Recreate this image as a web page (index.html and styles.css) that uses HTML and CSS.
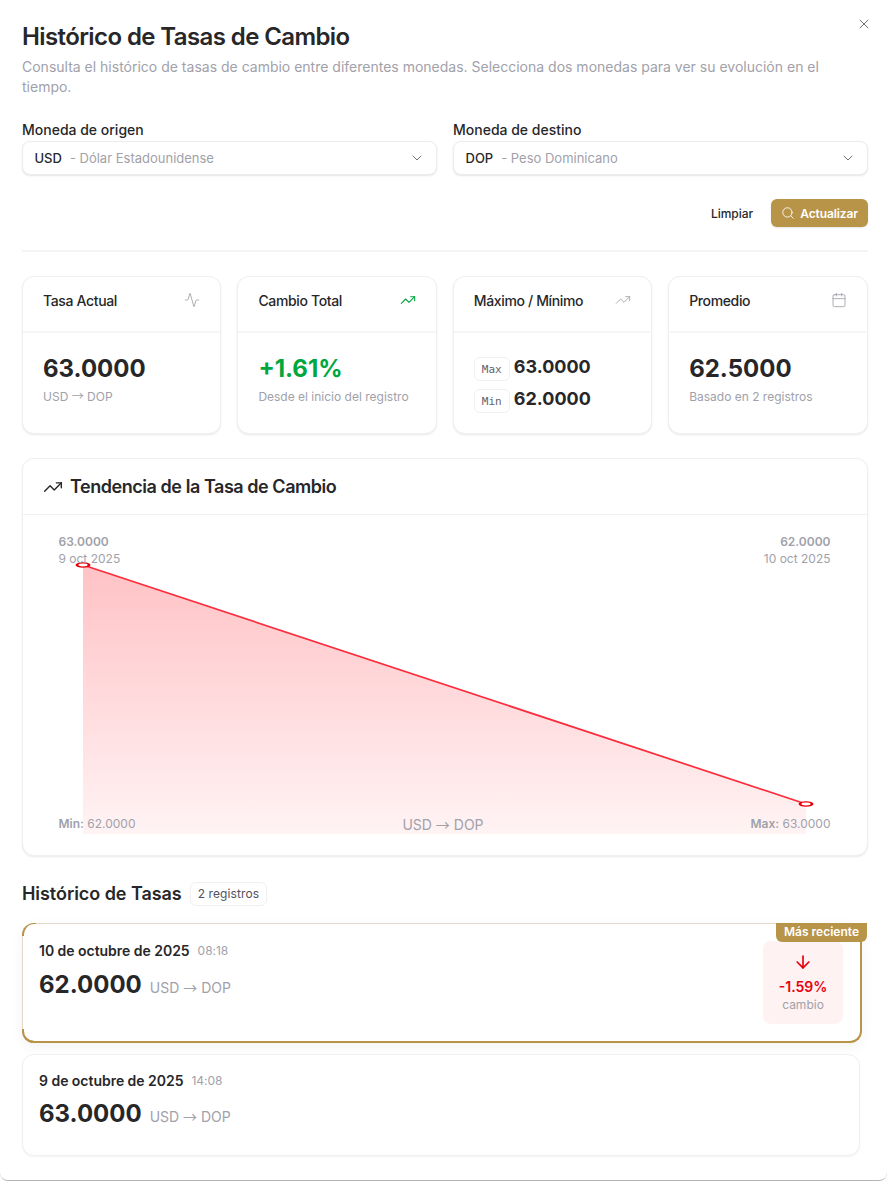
FILE: index.html
```html
<!DOCTYPE html>
<html lang="en">
<head>
    <meta charset="UTF-8">
    <meta name="viewport" content="width=device-width, initial-scale=1.0">
    <title>Histórico de Tasas de Cambio</title>
    <link rel="stylesheet" href="styles.css">
</head>
<body>

<div class="modal">
    <button class="close-btn" aria-label="Cerrar">
        <svg viewBox="0 0 24 24" class="icon-close"><path d="M18 6 6 18"/><path d="m6 6 12 12"/></svg>
    </button>

    <!-- Header -->
    <h1 class="modal-title">Histórico de Tasas de Cambio</h1>
    <p class="modal-desc">Consulta el histórico de tasas de cambio entre diferentes monedas. Selecciona dos monedas para ver su evolución en el tiempo.</p>

    <!-- Currency selects -->
    <div class="selects">
        <div class="field">
            <label class="field-label">Moneda de origen</label>
            <div class="select-box">
                <span class="code">USD</span>
                <span class="name">- Dólar Estadounidense</span>
                <svg viewBox="0 0 24 24" class="icon-chevron"><path d="m6 9 6 6 6-6"/></svg>
            </div>
        </div>
        <div class="field">
            <label class="field-label">Moneda de destino</label>
            <div class="select-box">
                <span class="code">DOP</span>
                <span class="name">- Peso Dominicano</span>
                <svg viewBox="0 0 24 24" class="icon-chevron"><path d="m6 9 6 6 6-6"/></svg>
            </div>
        </div>
    </div>

    <div class="actions">
        <button class="btn-clear">Limpiar</button>
        <button class="btn-update">
            <svg viewBox="0 0 24 24" class="icon-search"><circle cx="11" cy="11" r="8"/><path d="m21 21-4.3-4.3"/></svg>
            Actualizar
        </button>
    </div>

    <hr class="divider">

    <!-- Stat cards -->
    <div class="stats">
        <div class="card stat">
            <div class="stat-head">
                <span>Tasa Actual</span>
                <svg viewBox="0 0 24 24" class="stat-icon"><path d="M22 12h-2.48a2 2 0 0 0-1.93 1.46l-2.35 8.36a.25.25 0 0 1-.48 0L9.24 2.18a.25.25 0 0 0-.48 0l-2.35 8.36A2 2 0 0 1 4.49 12H2"/></svg>
            </div>
            <div class="stat-body">
                <div class="stat-value">63.0000</div>
                <div class="stat-note">USD <span class="arrow">→</span> DOP</div>
            </div>
        </div>
        <div class="card stat">
            <div class="stat-head">
                <span>Cambio Total</span>
                <svg viewBox="0 0 24 24" class="stat-icon green"><path d="M22 7 13.5 15.5 8.5 10.5 2 17"/><path d="M16 7h6v6"/></svg>
            </div>
            <div class="stat-body">
                <div class="stat-value green">+1.61%</div>
                <div class="stat-note">Desde el inicio del registro</div>
            </div>
        </div>
        <div class="card stat">
            <div class="stat-head">
                <span>Máximo / Mínimo</span>
                <svg viewBox="0 0 24 24" class="stat-icon"><path d="M22 7 13.5 15.5 8.5 10.5 2 17"/><path d="M16 7h6v6"/></svg>
            </div>
            <div class="stat-body minmax">
                <div class="minmax-row"><span class="tag">Max</span><span class="minmax-value">63.0000</span></div>
                <div class="minmax-row"><span class="tag">Min</span><span class="minmax-value">62.0000</span></div>
            </div>
        </div>
        <div class="card stat">
            <div class="stat-head">
                <span>Promedio</span>
                <svg viewBox="0 0 24 24" class="stat-icon"><path d="M8 2v4"/><path d="M16 2v4"/><rect width="18" height="18" x="3" y="4" rx="2"/><path d="M3 10h18"/></svg>
            </div>
            <div class="stat-body">
                <div class="stat-value">62.5000</div>
                <div class="stat-note">Basado en 2 registros</div>
            </div>
        </div>
    </div>

    <!-- Chart -->
    <div class="card chart-card">
        <div class="chart-head">
            <svg viewBox="0 0 24 24" class="icon-trend"><path d="M22 7 13.5 15.5 8.5 10.5 2 17"/><path d="M16 7h6v6"/></svg>
            <h2>Tendencia de la Tasa de Cambio</h2>
        </div>
        <div class="chart-body">
            <svg class="chart-svg" viewBox="0 0 844 340">
                <defs>
                    <linearGradient id="area" x1="0" y1="0" x2="0" y2="1">
                        <stop offset="0" stop-color="#ffc2c5"/>
                        <stop offset="1" stop-color="#fff3f4"/>
                    </linearGradient>
                </defs>
                <polygon points="60,50 783,289 783,319 60,319" fill="url(#area)"/>
                <line x1="60" y1="50" x2="783" y2="289" stroke="#fb2c3c" stroke-width="1.7"/>
                <ellipse cx="60" cy="50" rx="7.5" ry="2.8" fill="#e7000b"/>
                <ellipse cx="60" cy="50" rx="4.6" ry="1.4" fill="#fff"/>
                <ellipse cx="783" cy="289" rx="7.5" ry="2.8" fill="#e7000b"/>
                <ellipse cx="783" cy="289" rx="4.6" ry="1.4" fill="#fff"/>
            </svg>
            <div class="chart-top">
                <div><b>63.0000</b><br>9 oct 2025</div>
                <div class="right"><b>62.0000</b><br>10 oct 2025</div>
            </div>
            <div class="chart-bottom">
                <div><b>Min:</b> 62.0000</div>
                <div class="chart-pair">USD <span class="arrow">→</span> DOP</div>
                <div><b>Max:</b> 63.0000</div>
            </div>
        </div>
    </div>

    <!-- History -->
    <div class="history-head">
        <h2>Histórico de Tasas</h2>
        <span class="count">2 registros</span>
    </div>

    <div class="history-item latest">
        <span class="ribbon">Más reciente</span>
        <div class="item-main">
            <div class="item-date"><strong>10 de octubre de 2025</strong><span>08:18</span></div>
            <div class="item-rate"><strong>62.0000</strong><span>USD <span class="arrow">→</span> DOP</span></div>
        </div>
        <div class="change">
            <svg viewBox="0 0 24 24" class="icon-down"><path d="M12 5v14"/><path d="m19 12-7 7-7-7"/></svg>
            <div class="change-value">-1.59%</div>
            <div class="change-label">cambio</div>
        </div>
    </div>

    <div class="history-item">
        <div class="item-main">
            <div class="item-date"><strong>9 de octubre de 2025</strong><span>14:08</span></div>
            <div class="item-rate"><strong>63.0000</strong><span>USD <span class="arrow">→</span> DOP</span></div>
        </div>
    </div>
</div>

</body>
</html>
```

FILE: styles.css
```css
/* General styles */
* {
    box-sizing: border-box;
}
html, body {
    margin: 0;
    height: 1181px;
    overflow: hidden;
}
body {
    font-family: Inter, "Liberation Sans", sans-serif;
    background-color: #fff;
    color: #27272a;
}
svg {
    fill: none;
    stroke: currentColor;
    stroke-width: 2;
    stroke-linecap: round;
    stroke-linejoin: round;
}
button {
    font-family: inherit;
    border: none;
    background: none;
    cursor: pointer;
}
.arrow {
    font-family: "Noto Sans CJK SC", sans-serif;
    line-height: 1;
}

.modal {
    position: relative;
    height: 1181px;
    padding: 21px 19px 0 22px;
    border-bottom: 1px solid #b5b5b8;
    border-radius: 0 0 8px 8px;
}
.close-btn {
    position: absolute;
    top: 16px;
    right: 15px;
    padding: 0;
    width: 16px;
    height: 16px;
    color: #71717a;
}
.icon-close {
    display: block;
    width: 16px;
    height: 16px;
    stroke-width: 1.5;
}
.modal-title {
    margin: 0;
    font-size: 24px;
    line-height: 32px;
    font-weight: 600;
    letter-spacing: -0.6px;
}
.modal-desc {
    margin: 4px 0 0;
    font-size: 14px;
    line-height: 20px;
    color: #a1a1aa;
}

/* Selects */
.selects {
    display: grid;
    grid-template-columns: 1fr 1fr;
    gap: 16px;
    margin-top: 23px;
}
.field-label {
    display: block;
    font-size: 14px;
    line-height: 20px;
    font-weight: 500;
}
.select-box {
    display: flex;
    align-items: center;
    height: 34px;
    margin-top: 1px;
    padding: 0 11px 0 12px;
    border: 1px solid #ececee;
    border-radius: 8px;
    background: #fff;
    box-shadow: 0 1px 2px rgba(0, 0, 0, 0.1);
    font-size: 13px;
}
.code {
    font-weight: 500;
    margin-left: -0.5px;
}
.name {
    margin-left: 8px;
    color: #a1a1aa;
}
.icon-chevron {
    width: 16px;
    height: 16px;
    margin-left: auto;
    color: #71717a;
    stroke-width: 1.5;
}

.actions {
    display: flex;
    justify-content: flex-end;
    align-items: center;
    gap: 8px;
    margin-top: 24px;
}
.btn-clear {
    height: 28px;
    padding: 0 10px;
    font-size: 12px;
    font-weight: 500;
    color: #27272a;
}
.btn-update {
    display: flex;
    align-items: center;
    gap: 5px;
    height: 28px;
    padding: 0 10px;
    border-radius: 6px;
    background-color: #b89449;
    color: #fff;
    font-size: 12px;
    font-weight: 600;
    letter-spacing: -0.1px;
    box-shadow: 0 1px 2px rgba(0, 0, 0, 0.1);
}
.icon-search {
    width: 14px;
    height: 14px;
    stroke-width: 1.5;
}
.divider {
    margin: 23px 0 0;
    border: none;
    height: 2px;
    background-color: #f4f4f5;
}

/* Cards */
.card {
    background: #fff;
    border: 1px solid #f0f0f1;
    border-radius: 12px;
    box-shadow: 0 1px 2px rgba(0, 0, 0, 0.09);
}
.stats {
    display: grid;
    grid-template-columns: repeat(4, 1fr);
    gap: 16px;
    margin-top: 24px;
    margin-right: 0.5px;
}
.stat {
    height: 158px;
}
.stat-head {
    display: flex;
    justify-content: space-between;
    align-items: flex-start;
    height: 56px;
    padding: 14px 20px 0;
    border-bottom: 2px solid #f6f6f7;
    font-size: 14px;
    line-height: 20px;
    font-weight: 500;
    letter-spacing: -0.35px;
}
.stat-icon {
    width: 16px;
    height: 16px;
    margin-top: 1px;
    color: #a1a1aa;
    stroke-width: 1.3;
}
.stat-icon.green {
    color: #00a63e;
    stroke-width: 1.6;
}
.stat-body {
    padding: 20px 20px 0;
}
.stat-value {
    font-size: 24px;
    line-height: 32px;
    font-weight: 700;
}
.stat-value.green {
    color: #00a63e;
}
.stat-note {
    margin-top: 4px;
    font-size: 12px;
    line-height: 16px;
    color: #a1a1aa;
}
.minmax {
    padding-top: 22px;
}
.minmax-row {
    display: flex;
    align-items: center;
    gap: 4px;
    height: 24px;
    margin-bottom: 8px;
}
.tag {
    display: inline-block;
    width: 36px;
    height: 24px;
    line-height: 24px;
    margin-top: 3px;
    text-align: center;
    border: 1px solid #f0f0f1;
    border-radius: 6px;
    font-family: "DejaVu Sans Mono", "Liberation Mono", monospace;
    font-size: 11px;
    color: #62626b;
}
.minmax-value {
    font-size: 18px;
    font-weight: 700;
    margin-bottom: 2px;
}

/* Chart */
.chart-card {
    margin-top: 24px;
    margin-right: 0.5px;
    height: 398px;
}
.chart-head {
    display: flex;
    align-items: center;
    gap: 7px;
    height: 56px;
    padding: 0 20px;
    border-bottom: 1px solid #f0f0f1;
}
.chart-head h2 {
    margin: 0;
    font-size: 18px;
    font-weight: 600;
    letter-spacing: -0.45px;
}
.icon-trend {
    width: 20px;
    height: 20px;
    stroke-width: 1.7;
}
.chart-body {
    position: relative;
    height: 340px;
    display: flex;
    flex-direction: column;
    justify-content: space-between;
    padding: 19px 36px 23px 35.5px;
    font-size: 12px;
    line-height: 16.5px;
    color: #a1a1aa;
}
.chart-svg {
    position: absolute;
    top: 0;
    left: 0;
    width: 844px;
    height: 340px;
    stroke: none;
}
.chart-top, .chart-bottom {
    position: relative;
    display: flex;
    justify-content: space-between;
}
.chart-top b, .chart-bottom b {
    font-weight: 600;
}
.right {
    text-align: right;
}
.chart-bottom {
    line-height: 16px;
}
.chart-pair {
    font-size: 14px;
    transform: translateY(1px);
}

/* History */
.history-head {
    display: flex;
    align-items: center;
    gap: 8px;
    margin-top: 26px;
}
.history-head h2 {
    margin: 0;
    font-size: 18px;
    line-height: 24px;
    font-weight: 600;
    letter-spacing: -0.05px;
}
.count {
    height: 24px;
    line-height: 22px;
    padding: 0 7px;
    border: 1px solid #f0f0f1;
    border-radius: 6px;
    font-size: 12px;
    letter-spacing: 0.1px;
    color: #52525b;
}
.history-item {
    position: relative;
    display: flex;
    justify-content: space-between;
    width: 838px;
    height: 102px;
    margin-top: 11px;
    padding: 16px 17px 16px 16px;
    border: 1px solid #f0f0f1;
    border-radius: 12px;
    background: #fff;
    box-shadow: 0 1px 2px rgba(0, 0, 0, 0.05);
}
.history-item.latest {
    width: 840px;
    height: 120px;
    margin-top: 17px;
    padding-top: 17px;
    border-color: #e3dacb;
    border-right: 2px solid #b89449;
    border-bottom: 2px solid #b89449;
    box-shadow: 0 4px 14px rgba(0, 0, 0, 0.05);
}
/* gold arcs on the two left corners */
.history-item.latest::before,
.history-item.latest::after {
    content: "";
    position: absolute;
    left: -1px;
    width: 12px;
    height: 12px;
    border-left: 2px solid #b89449;
}
.history-item.latest::before {
    top: -1px;
    border-top: 1px solid #b89449;
    border-top-left-radius: 12px;
}
.history-item.latest::after {
    bottom: -2px;
    border-bottom: 2px solid #b89449;
    border-bottom-left-radius: 12px;
}
.latest .item-rate {
    margin-top: 8px;
}
.ribbon {
    position: absolute;
    top: -1px;
    right: -7px;
    height: 19px;
    line-height: 17px;
    padding: 0 8px;
    border-radius: 0 0 6px 6px;
    background-color: #b89449;
    color: #fff;
    font-size: 12px;
    font-weight: 600;
}
.item-date {
    display: flex;
    align-items: center;
    gap: 8px;
    font-size: 14px;
    line-height: 20px;
    font-weight: 600;
    letter-spacing: -0.03px;
}
.item-date strong {
    font-weight: 600;
}
.item-date span {
    font-size: 12px;
    font-weight: 400;
    color: #a1a1aa;
}
.item-rate {
    display: flex;
    align-items: baseline;
    gap: 8px;
    margin-top: 7px;
}
.item-rate strong {
    font-size: 24px;
    line-height: 32px;
    font-weight: 700;
}
.item-rate span {
    font-size: 14px;
    color: #a1a1aa;
}
.change {
    width: 80px;
    height: 83px;
    padding-top: 11px;
    border-radius: 8px;
    background-color: #fef2f2;
    text-align: center;
}
.icon-down {
    display: block;
    width: 20px;
    height: 20px;
    margin: 0 auto;
    color: #e7000b;
}
.change-value {
    margin-top: 5px;
    font-size: 14px;
    line-height: 20px;
    font-weight: 600;
    color: #e7000b;
}
.change-label {
    font-size: 12px;
    line-height: 16px;
    color: #a1a1aa;
}
```
